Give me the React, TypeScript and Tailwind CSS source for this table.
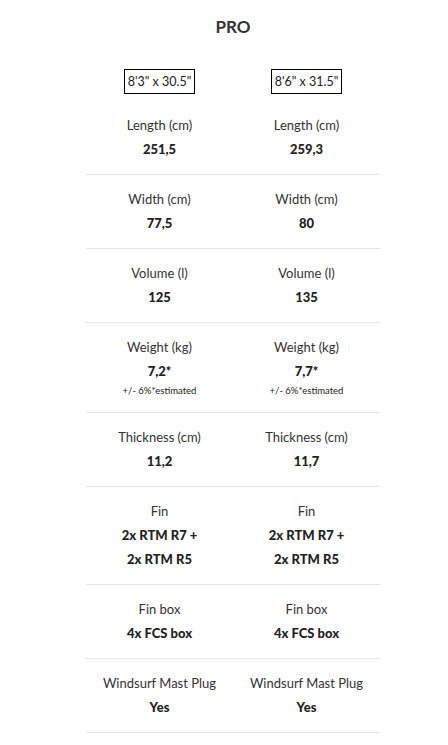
const sizes = ['8\'3" x 30.5"', '8\'6" x 31.5"'];

type Spec = { label: string; values: string[][]; note?: string };

const specs: Spec[] = [
  { label: 'Length (cm)', values: [['251,5'], ['259,3']] },
  { label: 'Width (cm)', values: [['77,5'], ['80']] },
  { label: 'Volume (l)', values: [['125'], ['135']] },
  { label: 'Weight (kg)', values: [['7,2*'], ['7,7*']], note: '+/- 6%*estimated' },
  { label: 'Thickness (cm)', values: [['11,2'], ['11,7']] },
  { label: 'Fin', values: [['2x RTM R7 +', '2x RTM R5'], ['2x RTM R7 +', '2x RTM R5']] },
  { label: 'Fin box', values: [['4x FCS box'], ['4x FCS box']] },
  { label: 'Windsurf Mast Plug', values: [['Yes'], ['Yes']] },
];

export default function App() {
  return (
    <div className="bg-white min-h-[745px] text-[#333] font-['Lato','Noto_Sans',sans-serif]">
      <div className="mx-[86px] w-[294px]">
        <h1 className="text-center text-[17px] font-bold leading-[20px] pt-[17px]">PRO</h1>

        {/* Size headers */}
        <div className="grid grid-cols-2 pt-[32px]">
          {sizes.map((s) => (
            <div key={s} className="flex justify-center">
              <span className="border border-black px-[3px] h-[25px] leading-[23px] text-[12.5px] text-[#222]">
                {s}
              </span>
            </div>
          ))}
        </div>

        {/* Spec rows */}
        {specs.map((spec, i) => (
          <div
            key={spec.label}
            className={`grid grid-cols-2 border-b border-[#e5e5e5] pb-[13px] ${i === 0 ? 'pt-[19px]' : 'pt-[12px]'}`}
          >
            {spec.values.map((lines, c) => (
              <div key={c} className="text-center">
                <div className="text-[13px] leading-[24px]">{spec.label}</div>
                {lines.map((l) => (
                  <div key={l} className="text-[13px] leading-[24px] font-black text-[#222]">
                    {l}
                  </div>
                ))}
                {spec.note && <div className="text-[9.5px] leading-[16px] text-[#222]">{spec.note}</div>}
              </div>
            ))}
          </div>
        ))}
      </div>
    </div>
  );
}
